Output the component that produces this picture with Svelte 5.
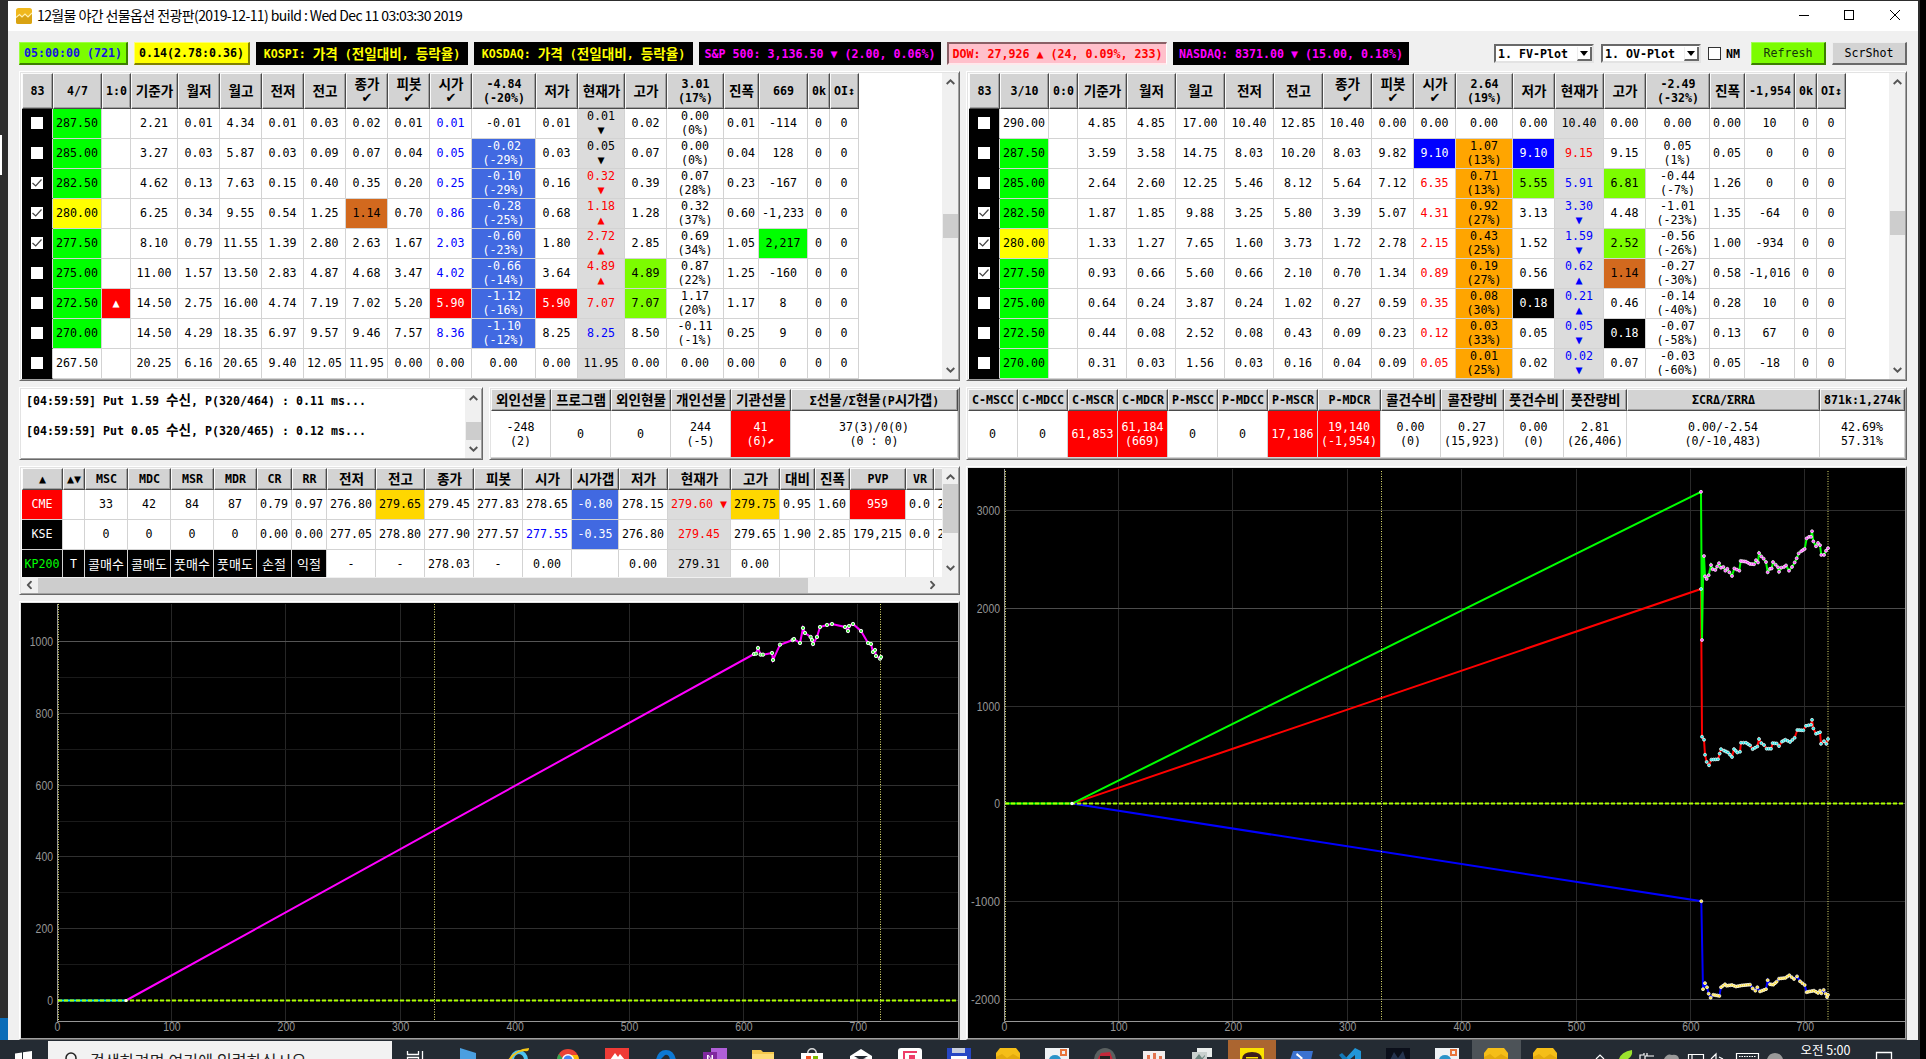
<script>
  // Cell notation: words split on spaces, "_" is empty or a blank inside text, "~" breaks the line, "@x" picks a style.
  const parse = (line) =>
    line.split(' ').map((word) => {
      const [text, cls = ''] = word.split('@');
      return { cls, lines: text === '_' ? [''] : text.split('~').map((t) => t.replaceAll('_', ' ')) };
    });
  const runs = (text) => text.split(/([가-힣]+)/).filter((s) => s !== '').map((s) => ({ s, ko: /[가-힣]/.test(s) }));
  const grid = (widths) => widths.map((w) => w + 'px').join(' ');

  const calls = {
    widths: [31, 49, 29, 47, 42, 42, 42, 42, 42, 42, 42, 64, 42, 47, 42, 57, 35, 49, 22, 29],
    head: parse('83 4/7 1:0 기준가 월저 월고 전저 전고 종가~✔ 피봇~✔ 시가~✔ -4.84~(-20%) 저가 현재가 고가 3.01~(17%) 진폭 669 0k OI↕'),
    thumb: 129,
    rows: [
      '0 287.50@lime _ 2.21 0.01 4.34 0.01 0.03 0.02 0.01 0.01@tb -0.01 0.01 0.01~▼@now 0.02 0.00~(0%) 0.01 -114 0 0',
      '0 285.00@lime _ 3.27 0.03 5.87 0.03 0.09 0.07 0.04 0.05@tb -0.02~(-29%)@royal 0.03 0.05~▼@now 0.07 0.00~(0%) 0.04 128 0 0',
      '1 282.50@lime _ 4.62 0.13 7.63 0.15 0.40 0.35 0.20 0.25@tb -0.10~(-29%)@royal 0.16 0.32~▼@nowr 0.39 0.07~(28%) 0.23 -167 0 0',
      '1 280.00@yel _ 6.25 0.34 9.55 0.54 1.25 1.14@choc 0.70 0.86@tb -0.28~(-25%)@royal 0.68 1.18~▲@nowr 1.28 0.32~(37%) 0.60 -1,233 0 0',
      '1 277.50@lime _ 8.10 0.79 11.55 1.39 2.80 2.63 1.67 2.03@tb -0.60~(-23%)@royal 1.80 2.72~▲@nowr 2.85 0.69~(34%) 1.05 2,217@lime 0 0',
      '0 275.00@lime _ 11.00 1.57 13.50 2.83 4.87 4.68 3.47 4.02@tb -0.66~(-14%)@royal 3.64 4.89~▲@nowr 4.89@lawn 0.87~(22%) 1.25 -160 0 0',
      '0 272.50@lime ▲@red 14.50 2.75 16.00 4.74 7.19 7.02 5.20 5.90@red -1.12~(-16%)@royal 5.90@red 7.07@nowr 7.07@lawn 1.17~(20%) 1.17 8 0 0',
      '0 270.00@lime _ 14.50 4.29 18.35 6.97 9.57 9.46 7.57 8.36@tb -1.10~(-12%)@royal 8.25 8.25@nowb 8.50 -0.11~(-1%) 0.25 9 0 0',
      '0 267.50 _ 20.25 6.16 20.65 9.40 12.05 11.95 0.00 0.00 0.00 0.00 11.95@now 0.00 0.00 0.00 0 0 0'
    ].map(parse)
  };
  const puts = {
    widths: [31, 49, 29, 49, 49, 49, 49, 49, 49, 42, 42, 57, 42, 49, 42, 64, 35, 50, 22, 29],
    head: parse('83 3/10 0:0 기준가 월저 월고 전저 전고 종가~✔ 피봇~✔ 시가~✔ 2.64~(19%) 저가 현재가 고가 -2.49~(-32%) 진폭 -1,954 0k OI↕'),
    thumb: 126,
    rows: [
      '0 290.00 _ 4.85 4.85 17.00 10.40 12.85 10.40 0.00 0.00 0.00 0.00 10.40@now 0.00 0.00 0.00 10 0 0',
      '0 287.50@lime _ 3.59 3.58 14.75 8.03 10.20 8.03 9.82 9.10@blue 1.07~(13%)@org 9.10@blue 9.15@nowr 9.15 0.05~(1%) 0.05 0 0 0',
      '0 285.00@lime _ 2.64 2.60 12.25 5.46 8.12 5.64 7.12 6.35@tr 0.71~(13%)@org 5.55@lawn 5.91@nowb 6.81@lawn -0.44~(-7%) 1.26 0 0 0',
      '1 282.50@lime _ 1.87 1.85 9.88 3.25 5.80 3.39 5.07 4.31@tr 0.92~(27%)@org 3.13 3.30~▼@nowb 4.48 -1.01~(-23%) 1.35 -64 0 0',
      '1 280.00@yel _ 1.33 1.27 7.65 1.60 3.73 1.72 2.78 2.15@tr 0.43~(25%)@org 1.52 1.59~▼@nowb 2.52@lawn -0.56~(-26%) 1.00 -934 0 0',
      '1 277.50@lime _ 0.93 0.66 5.60 0.66 2.10 0.70 1.34 0.89@tr 0.19~(27%)@org 0.56 0.62~▲@nowb 1.14@choc -0.27~(-30%) 0.58 -1,016 0 0',
      '0 275.00@lime _ 0.64 0.24 3.87 0.24 1.02 0.27 0.59 0.35@tr 0.08~(30%)@org 0.18@blk 0.21~▲@nowb 0.46 -0.14~(-40%) 0.28 10 0 0',
      '0 272.50@lime _ 0.44 0.08 2.52 0.08 0.43 0.09 0.23 0.12@tr 0.03~(33%)@org 0.05 0.05~▼@nowb 0.18@blk -0.07~(-58%) 0.13 67 0 0',
      '0 270.00@lime _ 0.31 0.03 1.56 0.03 0.16 0.04 0.09 0.05@tr 0.01~(25%)@org 0.02 0.02~▼@nowb 0.07 -0.03~(-60%) 0.05 -18 0 0'
    ].map(parse)
  };
  const investors = {
    widths: [60, 60, 60, 60, 60, 167],
    head: parse('외인선물 프로그램 외인현물 개인선물 기관선물 Σ선물/Σ현물(P시가갭)'),
    row: parse('-248~(2) 0 0 244~(-5) 41~(6)⬈@red 37(3)/0(0)~(0_:_0)')
  };
  const ratios = {
    widths: [50, 50, 50, 50, 50, 50, 50, 63, 60, 63, 60, 63, 193, 85],
    head: parse('C-MSCC C-MDCC C-MSCR C-MDCR P-MSCC P-MDCC P-MSCR P-MDCR 콜건수비 콜잔량비 풋건수비 풋잔량비 ΣCRΔ/ΣRRΔ 871k:1,274k'),
    row: parse('0 0 61,853@red 61,184~(669)@red 0 0 17,186@red 19,140~(-1,954)@red 0.00~(0) 0.27~(15,923) 0.00~(0) 2.81~(26,406) 0.00/-2.54~(0/-10,483) 42.69%~57.31%')
  };
  const futures = {
    widths: [41, 22, 43, 43, 43, 43, 35, 35, 49, 49, 49, 49, 49, 47, 49, 63, 49, 35, 35, 56, 28, 15],
    head: parse('▲ ▲▼ MSC MDC MSR MDR CR RR 전저 전고 종가 피봇 시가 시가갭 저가 현재가 고가 대비 진폭 PVP VR _'),
    rows: [
      'CME@red _ 33 42 84 87 0.79 0.97 276.80 279.65@gold 279.45 277.83 278.65 -0.80@royal 278.15 279.60_▼@nowr 279.75@gold 0.95 1.60 959@red 0.0 2',
      'KSE@blk _ 0 0 0 0 0.00 0.00 277.05 278.80 277.90 277.57 277.55@tb -0.35@royal 276.80 279.45@nowr 279.65 1.90 2.85 179,215 0.0 2',
      'KP200@kp T@blk 콜매수@blk 콜매도@blk 풋매수@blk 풋매도@blk 손절@blk 익절@blk - - 278.03 - 0.00 _ 0.00 279.31@now 0.00 _ _ _ _ _'
    ].map(parse)
  };

  // Chart series. Tail samples sit on a fine lattice whose origin and step belong to the plot.
  const onLattice = (flat, ox, oy, sx, sy) => {
    const pts = [];
    for (let i = 0; i < flat.length; i += 2) pts.push([ox + flat[i] / sx, oy + flat[i + 1] / sy]);
    return pts;
  };
  const path = (pts) => pts.map((p) => p[0].toFixed(1) + ',' + p[1].toFixed(1)).join(' ');
  const markers = (pts) => {
    const out = [];
    for (let i = 0; i < pts.length - 1; i++) {
      const [a, b] = [pts[i], pts[i + 1]];
      const n = Math.max(1, Math.round((b[0] - a[0]) / 2.1));
      for (let k = 0; k < n; k++) out.push([a[0] + ((b[0] - a[0]) * k) / n, a[1] + ((b[1] - a[1]) * k) / n]);
    }
    out.push(pts[pts.length - 1]);
    return out;
  };

  const fvTail = onLattice([42,132,48,131,54,114,62,134,69,134,96,129,99,150,120,104,158,90,162,87,180,99,189,54,195,69,212,81,216,90,219,102,231,81,240,51,261,45,276,42,315,51,324,63,327,48,339,42,363,63,384,99,393,102,399,126,405,120,408,138,420,146,423,141], 740, 610, 3, 3);
  const rx = 1660, ry = 470, sy = 2.662;
  const green = onLattice([132,229,135,283,140,290,146,280,153,253,158,264,166,266,177,248,183,260,190,258,196,268,202,263,208,272,216,282,223,262,238,268,242,242,258,244,270,250,282,251,288,240,294,246,297,221,304,230,311,236,318,245,323,272,330,263,335,262,339,245,347,252,354,259,357,271,364,260,372,258,378,254,387,268,396,258,404,246,410,235,416,222,424,216,434,210,440,182,447,178,453,178,456,163,460,190,468,203,474,194,480,200,484,226,492,226,498,215,504,208], rx, ry, 3, sy);
  const red = onLattice([126,710,132,718,135,758,140,777,147,786,154,771,174,770,179,755,183,743,192,747,204,752,216,764,222,743,232,752,240,750,243,726,258,726,270,733,278,743,292,736,297,716,304,727,312,732,320,742,333,742,338,727,350,728,357,735,366,723,376,718,390,724,404,713,412,692,430,693,438,681,453,678,456,665,460,688,468,702,480,698,483,729,492,722,499,729,504,716], rx, ry, 3, sy);
  const blue = onLattice([129,1382,135,1366,141,1377,146,1394,152,1405,160,1397,178,1400,183,1377,195,1369,200,1373,216,1371,228,1375,246,1372,270,1370,278,1380,286,1386,292,1377,300,1388,318,1382,323,1358,330,1369,340,1370,350,1362,357,1354,376,1352,388,1345,402,1355,411,1348,420,1361,434,1371,440,1390,450,1388,462,1386,474,1392,480,1386,484,1393,491,1384,497,1394,501,1403,504,1397], rx, ry, 3, sy);
  const ovLines = [
    { color: '#0000ff', pts: [[1072, 803.6], [1701.3, 901.2], [1703, 989], ...blue], dots: markers(blue), dot: '#ffe033', extra: [[1701.3, 901.2]] },
    { color: '#ff0000', pts: [[1072, 803.6], [1701, 589], [1702, 736.7], ...red], dots: markers(red), dot: '#22e6e6', extra: [[1701, 589]] },
    { color: '#00ff00', pts: [[1072, 803.6], [1701, 491.8], [1702, 640], [1703.4, 556], ...green], dots: markers(green), dot: '#ff44ff', extra: [[1701, 491.8], [1702, 640]] }
  ];

  const tickX = [0, 1, 2, 3, 4, 5, 6, 7];
  const fvY = [[1000, 641.5], [800, 713.5], [600, 785.5], [400, 856.5], [200, 928.5], [0, 1000.5]];
  const ovY = [[3000, 510.5], [2000, 608.5], [1000, 706.5], [0, 803.5], [-1000, 901.5], [-2000, 999.5]];

  const apps = [
    [['M2 0 18 5 18 12 2 12Z', '#4a9fe0']],
    [['M3 12a9 10 0 0 1 18 0h-4a5 6 0 0 0-10 0z', '#4cc3f1'], ['M1 12Q8 1 22 0 22 4 18 3 8 4 4 12z', '#f5c518']],
    [['M1 12a11 11 0 0 1 22 0z', '#ea4335'], ['M1 12Q1 8 3 6L8 12z', '#34a853'], ['M23 12Q23 9 21.500 7H14L17 12z', '#fbbc05'], ['M12 6a6 6 0 0 1 6 6H6a6 6 0 0 1 6-6z', '#fff'], ['M12 7.500a4.500 4.500 0 0 1 4.500 4.500H7.500A4.500 4.500 0 0 1 12 7.500z', '#4285f4']],
    [['M0 0h24v12H0z', '#ef3b36'], ['M5 12 10 5 13 9 15 6 20 12z', '#fff']],
    [['M2 12Q4 2 12 2T22 12H16Q15 6 11 7L6 12z', '#0d78d4']],
    [['M8 0h16v12H8z', '#b05fd8'], ['M0 4h14v8H0z', '#80289f'], ['M4 12V7h1.5l3 4V7H10v5H8.5L5.5 8v4z', '#fff']],
    [['M1 2h9l2 2h11v8H1z', '#f5c84c'], ['M1 6h22v6H1z', '#ffdc75']],
    [['M1 5h22v7H1z', '#fff'], ['M7 5a5 5 0 0 1 10 0h-1.5a3.500 3.500 0 0 0-7 0z', '#ddd'], ['M6 8h5v4H6z', '#f25022'], ['M13 8h5v4h-5z', '#7fba00']],
    [['M1 8 12 1 23 8V12L12 10 1 12z', '#fff'], ['M5 8H19L12 12z', '#242a33']],
    [['M3 0h18q3 0 3 3v9H0V3q0-3 3-3z', '#fff'], ['M5 3h14v2H7v7H5z', '#ee3d68'], ['M11 7h6v5h-6z', '#ee3d68']],
    [['M0 0h24v12H0z', '#2746c4'], ['M5 0h13v5H5z', '#c8cedc'], ['M4 8h16v4H4z', '#fff']],
    [['M4 0h16l4 5v7H0V5z', '#f5be18'], ['M0 9 6 6 11 10 17 6 24 10v2H0z', '#e3a90d']],
    [['M0 0h24v12H0z', '#eef2f5'], ['M15 1h7v7h-7z', '#e8743b'], ['M17 3h3v3h-3z', '#eef2f5'], ['M4 12a6 5 0 0 1 12 0z', '#2a93c9']],
    [['M1 12A11 12 0 0 1 23 12z', '#5a6060'], ['M4 12 8 5 17 4 20 12z', '#c2283a'], ['M7 8h10v4H7z', '#222']],
    [['M1 3h22v9H1z', '#f3eeee'], ['M5 7h3v5H5zM11 5h3v7h-3zM17 8h3v4h-3z', '#e3744f']],
    [['M6 0h15v9H6z', '#e9eceb'], ['M1 4h15v8H1z', '#c9d0ce'], ['M4 11 8 6 11 10 14 7v1l-3 4z', '#68827c']],
    [['M0 0h24v12H0z', '#fae100'], ['M2 12Q2 4 12 4T22 12z', '#3b1e1e'], ['M6 9h12v1.500H6z', '#fae100']],
    [['M4 3h20l-2 9H1z', '#3b72d0'], ['M8 5 14 10 12 12 11 10 7 7z', '#fff']],
    [['M17 0 23 3V12H17V7L11 12H6z', '#2196d8'], ['M1 7 4 5 10 11 8 12H5z', '#1479b8']],
    [['M0 0h24v12H0z', '#0b0f1a'], ['M4 12 8 4 12 10 17 3 20 12z', '#25344f']],
    [['M0 0h24v12H0z', '#eef2f5'], ['M15 1h7v7h-7z', '#e8743b'], ['M17 3h3v3h-3z', '#eef2f5'], ['M4 12a6 5 0 0 1 12 0z', '#2a93c9']],
    [['M4 0h16l4 5v7H0V5z', '#f5be18'], ['M0 9 6 6 11 10 17 6 24 10v2H0z', '#e3a90d']],
    [['M4 0h16l4 5v7H0V5z', '#f5be18'], ['M0 9 6 6 11 10 17 6 24 10v2H0z', '#e3a90d']]
  ];
</script>

{#snippet rich(lines)}
  {#each lines as line}
    <span class="line" class:mark={line === '✔'}>{#each runs(line) as run}{#if run.ko}<span class="ko">{run.s}</span>{:else}{run.s}{/if}{/each}</span>
  {/each}
{/snippet}

{#snippet chevron(dir)}
  <svg class="chev {dir}" viewBox="0 0 9 6" width="9" height="6"><path d="M0.700 5 4.500 1.300 8.300 5" fill="none" stroke="#555" stroke-width="1.900" /></svg>
{/snippet}

{#snippet options(t)}
  <section class="frame split">
    <div class="sheet">
      <div class="row head tall" style="grid-template-columns: {grid(t.widths)}">
        {#each t.head as c}<div class="th">{@render rich(c.lines)}</div>{/each}
      </div>
      {#each t.rows as row}
        <div class="row" style="grid-template-columns: {grid(t.widths)}">
          {#each row as c, i}
            {#if i === 0}
              <div class="td check">
                <svg viewBox="0 0 12 12" width="12" height="12"><rect width="12" height="12" fill="#fff" />{#if c.lines[0] === '1'}<path d="M1.500 6 4.700 9 10.500 2.500" fill="none" stroke="#444" stroke-width="1.200" />{/if}</svg>
              </div>
            {:else}
              <div class="td {c.cls}">{@render rich(c.lines)}</div>
            {/if}
          {/each}
        </div>
      {/each}
    </div>
    <div class="vbar">{@render chevron('up')}<i class="thumb" style="height: 24px; margin-top: {t.thumb}px"></i>{@render chevron('down')}</div>
  </section>
{/snippet}

{#snippet summary(t)}
  <section class="frame">
    <div class="row head" style="grid-template-columns: {grid(t.widths)}">
      {#each t.head as c}<div class="th">{@render rich(c.lines)}</div>{/each}
    </div>
    <div class="row single" style="grid-template-columns: {grid(t.widths)}">
      {#each t.row as c}<div class="td {c.cls}">{@render rich(c.lines)}</div>{/each}
    </div>
  </section>
{/snippet}

{#snippet tick(x, y, label, anchor)}
  <text {x} {y} text-anchor={anchor} textLength={String(label).length * 5.8} lengthAdjust="spacingAndGlyphs">{label}</text>
{/snippet}

<div class="screen">
  <div class="window">
    <header class="title">
      <svg class="logo" viewBox="0 0 16 16" width="16" height="16"><rect width="16" height="16" rx="2.500" fill="#f0b81c" /><path d="M0 9.500 3.500 6.500 6 9 9 6 12 9 16 5V14q0 2-2 2H2q-2 0-2-2z" fill="#d9a312" /><path d="M0 9.500 3.500 6.500 6 9 9 6 12 9 16 5" fill="none" stroke="#fff0b0" stroke-width="1.200" /></svg>
      <span class="caption">12월물 야간 선물옵션 전광판(2019-12-11) build : Wed Dec 11 03:03:30 2019</span>
      <svg class="winbtns" viewBox="0 0 110 16" width="110" height="16" fill="none" stroke="#000"><path d="M4 7.500h10" /><rect x="49.500" y="2.500" width="9" height="9" /><path d="M95 2 105 12M105 2 95 12" /></svg>
    </header>

    <div class="bar">
      <div class="tag clock">05:00:00 (721)</div>
      <div class="tag gap">0.14(2.78:0.36)</div>
      <div class="tag kospi">KOSPI: <span class="ko">가격</span> (<span class="ko">전일대비</span>, <span class="ko">등락율</span>)</div>
      <div class="tag kosdaq">KOSDAQ: <span class="ko">가격</span> (<span class="ko">전일대비</span>, <span class="ko">등락율</span>)</div>
      <div class="tag sp">S&amp;P 500: 3,136.50 ▼ (2.00, 0.06%)</div>
      <div class="tag dow">DOW: 27,926 ▲ (24, 0.09%, 233)</div>
      <div class="tag nasdaq">NASDAQ: 8371.00 ▼ (15.00, 0.18%)</div>
      <div class="controls">
        <div class="combo">1. FV-Plot<span class="drop"></span></div>
        <div class="combo">1. OV-Plot<span class="drop"></span></div>
        <span class="box"></span><span class="nm">NM</span>
        <button class="btn refresh">Refresh</button>
        <button class="btn">ScrShot</button>
      </div>
    </div>

    <div class="columns">
      <div class="col left">
        {@render options(calls)}
        <div class="pair">
          <section class="frame split">
            <div class="log">
              <p>[04:59:59] Put 1.59 <span class="ko">수신</span>, P(320/464) : 0.11 ms...</p>
              <p>[04:59:59] Put 0.05 <span class="ko">수신</span>, P(320/465) : 0.12 ms...</p>
            </div>
            <div class="vbar">{@render chevron('up')}<i class="thumb" style="height: 18px; margin-top: 21px"></i>{@render chevron('down')}</div>
          </section>
          {@render summary(investors)}
        </div>
        <section class="frame futures">
          <div class="split grow">
            <div class="sheet">
              <div class="row head" style="grid-template-columns: {grid(futures.widths)}">
                {#each futures.head as c}<div class="th">{@render rich(c.lines)}</div>{/each}
              </div>
              {#each futures.rows as row}
                <div class="row" style="grid-template-columns: {grid(futures.widths)}">
                  {#each row as c}<div class="td {c.cls}">{@render rich(c.lines)}</div>{/each}
                </div>
              {/each}
            </div>
            <div class="vbar">{@render chevron('up')}<i class="thumb" style="height: 49px; margin-top: 4px"></i>{@render chevron('down')}</div>
          </div>
          <div class="hbar"><span class="turn l">{@render chevron('up')}</span><i class="hthumb"></i><span class="turn r">{@render chevron('up')}</span></div>
        </section>
        <section class="frame plot">
          <svg viewBox="21 603 937 435" width="937" height="435">
            <rect x="21" y="603" width="937" height="435" fill="#000" />
            {#each tickX as k}<path d="M{Math.round(57.5 + k * 114.4) - 0.5} 604V1021" stroke="#262626" />{/each}
            {#each fvY as [label, y]}<path d="M58 {y}H958" stroke={label === 1000 ? '#555' : '#303030'} />{#if y < 1000}<path d="M58 {y + 36}H958" stroke="#1a1a1a" />{/if}{/each}
            <path d="M57.500 604V1021.500H958" fill="none" stroke="#969696" />
            <path d="M58 1000.500H126" stroke="#00e5ff" stroke-width="2" />
            <polyline points="126,1000.5 {path(fvTail)}" fill="none" stroke="#ff00ff" stroke-width="2" />
            <path d="M58 1000.500H958" stroke="#adff00" stroke-width="2" stroke-dasharray="4 2" />
            {#each [58.5, 434.5, 880.5] as x}<path d="M{x} 604V1021" stroke="#e0e070" stroke-dasharray="1 1.500" />{/each}
            {#each fvTail as [x, y]}<circle cx={x} cy={y} r="1.700" fill="#4df04d" stroke="#fff" stroke-width="0.900" />{/each}
            <circle cx="126" cy="1000.500" r="1.500" fill="#fff" />
            <g class="ticks">
              {#each fvY as [label, y]}{@render tick(53, y + 4.5, label, 'end')}{/each}
              {#each tickX as k}{@render tick(57.5 + k * 114.4, 1031, k * 100, 'middle')}{/each}
            </g>
          </svg>
        </section>
      </div>

      <div class="col right">
        {@render options(puts)}
        {@render summary(ratios)}
        <section class="frame plot">
          <svg viewBox="968 468 937 570" width="937" height="570">
            <rect x="968" y="468" width="937" height="570" fill="#000" />
            {#each tickX as k}<path d="M{Math.round(1004.5 + k * 114.4) - 0.5} 469V1021" stroke="#292929" />{/each}
            {#each ovY as [label, y]}<path d="M1005 {y}H1905" stroke={label % 2000 ? '#2e2e2e' : '#4c4c4c'} />{/each}
            <path d="M1004.500 469V1021.500H1905" fill="none" stroke="#969696" />
            <path d="M1005 803.500H1072" stroke="#00ff00" stroke-width="2" />
            {#each ovLines as s}
              <polyline points={path(s.pts)} fill="none" stroke={s.color} stroke-width="2" />
            {/each}
            <path d="M1005 803.500H1905" stroke="#adff00" stroke-width="2" stroke-dasharray="4 2" />
            {#each [1005.5, 1381.5, 1828] as x}<path d="M{x} 471V1021" stroke="#e0e070" stroke-dasharray="1 1.500" />{/each}
            {#each ovLines as s}
              {#each [...s.dots, ...s.extra] as [x, y]}<circle cx={x} cy={y} r="1.500" fill={s.dot} stroke="#fff" stroke-width="0.700" />{/each}
            {/each}
            <circle cx="1072" cy="803.500" r="1.700" fill="#fff" />
            <g class="ticks">
              {#each ovY as [label, y]}{@render tick(1000, y + 4.5, label, 'end')}{/each}
              {#each tickX as k}{@render tick(1004.5 + k * 114.4, 1031, k * 100, 'middle')}{/each}
            </g>
          </svg>
        </section>
      </div>
    </div>
  </div>

  <footer class="taskbar">
    <svg class="start" viewBox="0 0 48 19" width="48" height="19"><path d="M15 13.500 22 12.500V19H15zM23 12.300 32 11V19H23z" fill="#fff" /></svg>
    <div class="search">
      <svg viewBox="0 0 14 16" width="14" height="16"><circle cx="7" cy="7" r="5" fill="none" stroke="#222" stroke-width="1.500" /></svg>
      <span>검색하려면 여기에 입력하십시오</span>
    </div>
    <svg class="taskview" viewBox="0 0 54 19" width="54" height="19"><path d="M15.500 11V14.500H26.500V11M15.500 19V17.500H26.500V19M30.500 11V19" fill="none" stroke="#fff" stroke-width="1.300" /></svg>
    {#each apps as shapes, i}
      <div class="app" class:talk={i === 16} class:active={i === 21}>
        <svg viewBox="0 0 24 12" width="24" height="12">{#each shapes as [d, fill]}<path {d} {fill} />{/each}</svg>
      </div>
    {/each}
    <svg class="tray" viewBox="1590 1040 200 19" width="200" height="19" fill="none" stroke="#fff" stroke-width="1.200">
      <path d="M1597 1059 1601 1055 1605 1059" />
      <path d="M1620 1059Q1622 1052 1633 1050 1634 1056 1629 1059z" fill="#9be22d" stroke="none" />
      <path d="M1641 1059V1055H1645V1053M1646 1059V1056H1655M1648 1053V1056" />
      <path d="M1665 1059Q1668 1053 1673 1055 1679 1054 1680 1059z" fill="#999" stroke="none" />
      <path d="M1689.500 1059V1054.500H1704.500V1059M1693 1055V1059" />
      <path d="M1712 1059 1717 1054V1059M1720 1057 1724 1059" />
      <path d="M1737.500 1059V1053.500H1759.500V1059" /><path d="M1740 1056.500H1757" stroke-dasharray="1.500 1" />
      <path d="M1768 1059Q1770 1053 1776 1053T1784 1059z" fill="#999" stroke="none" />
    </svg>
    <span class="time">오전 5:00</span>
    <svg class="notice" viewBox="0 0 30 19" width="30" height="19"><path d="M5.500 19V12.500H20.500V19" fill="none" stroke="#fff" stroke-width="1.300" /></svg>
  </footer>
</div>

<style>
  :global(body) { background: #000; overflow: hidden; }
  .screen {
    width: 1926px; height: 1059px; box-sizing: border-box; overflow: hidden;
    display: flex; flex-direction: column;
    background: linear-gradient(#fff, #fff) 0 135px / 2px 40px no-repeat,
      linear-gradient(#0a6cb8, #0a6cb8) 0 1018px / 8px 22px no-repeat,
      linear-gradient(90deg, #2d2d2d 1920px, #000 1920px);
    font-family: 'DejaVu Sans Mono', 'DejaVu Sans', 'Noto Sans CJK KR', monospace;
    font-size: 11.63px; color: #000;
  }
  .ko { font-family: 'Noto Sans CJK KR', sans-serif; font-size: 13.6px; line-height: 1; }
  .window { margin: 1px 0 0 8px; width: 1910px; height: 1039px; background: #f0f0f0; display: flex; flex-direction: column; flex: none; }
  .title { height: 30px; background: #fff; display: flex; align-items: center; flex: none; }
  .logo { margin: 0 5px 1px 8px; }
  .caption { font: 14px 'Noto Sans CJK KR', sans-serif; letter-spacing: -0.6px; white-space: nowrap; line-height: 20px; margin-top: -2px; }
  .winbtns { margin-left: auto; margin-right: 13px; }
  .bar { display: flex; gap: 6px; padding: 11px 11px 0; height: 23px; margin-bottom: 6px; flex: none; }
  .tag { height: 23px; box-sizing: border-box; display: flex; align-items: center; justify-content: center; font-weight: bold; white-space: pre; background: #000; flex: none; }
  .clock { width: 109px; background: #7cfc00; color: #1414e0; border: 1px solid #9cff40; border-right: 2px solid #3c7e00; border-bottom: 2px solid #3c7e00; }
  .gap { width: 116px; background: #ff0; border: 1px solid #ffff70; border-right: 2px solid #808000; border-bottom: 2px solid #808000; }
  .kospi { width: 212px; color: #ff0; }
  .kosdaq { width: 219px; color: #ff0; }
  .sp { width: 242px; color: #f0f; }
  .dow { width: 220px; color: #f00; background: #ffc0cb; border: 2px solid #8a6066; border-right: 1px solid #fff; border-bottom: 2px solid #ffe8ec; }
  .nasdaq { width: 236px; color: #f0f; }
  .controls { margin-left: auto; display: flex; align-items: center; height: 23px; font-weight: bold; }
  .combo { width: 100px; height: 19px; margin-right: 7px; box-sizing: border-box; background: #fff; border: 2px solid; border-color: #696969 #e3e3e3 #e3e3e3 #696969; display: flex; align-items: center; justify-content: space-between; padding-left: 2px; white-space: pre; }
  .drop { width: 15px; height: 14px; box-sizing: border-box; border-right: 2px solid #696969; border-bottom: 2px solid #696969; border-left: 1px solid #eee; position: relative; }
  .drop::after { content: ''; position: absolute; left: 2px; top: 4px; border: 4px solid transparent; border-top: 5px solid #000; border-bottom: 0; }
  .box { width: 11px; height: 11px; border: 1px solid #333; background: #fff; margin-right: 5px; }
  .nm { width: 14px; margin-right: 11px; }
  .btn { width: 75px; height: 23px; padding: 0; margin-left: 6px; font: inherit; font-weight: normal; color: #000; background: #d3d3d3; border: 1px solid #eee; border-right: 2px solid #696969; border-bottom: 2px solid #696969; }
  .refresh { background: #7cfc00; color: #14380c; margin-left: 0; border-color: #a0ff50 #3c7e00 #3c7e00 #a0ff50; }
  .columns { display: flex; gap: 6px; padding-left: 11px; }
  .col { width: 941px; display: grid; gap: 6px; }
  .left { grid-template-rows: 310px 73px 129px 439px; }
  .right { grid-template-rows: 310px 73px 574px; }
  .pair { display: grid; grid-template-columns: 464px 471px; gap: 6px; }
  .frame { box-sizing: border-box; border: 1px solid; border-color: #fff #696969 #696969 #fff; box-shadow: inset 1px 1px #e3e3e3, inset -1px -1px #a0a0a0; padding: 1px; background: #fff; overflow: hidden; min-width: 0; min-height: 0; }
  .split { display: flex; min-height: 0; }
  .sheet { flex: 1; overflow: hidden; padding-left: 1px; min-width: 0; }
  .row { display: grid; height: 30px; }
  .head { height: 22px; font-weight: bold; }
  .tall { height: 36px; }
  .single { height: 47px; }
  .th, .td { box-sizing: border-box; display: flex; flex-direction: column; align-items: center; justify-content: center; white-space: pre; overflow: hidden; line-height: 14px; }
  .th { background: #d3d3d3; border: 1px solid #fafafa; border-right: 1px solid #4a4a4a; border-bottom: 1px solid #4a4a4a; box-shadow: inset -1px -1px #a0a0a0; }
  .td { border-right: 1px solid #d3d3d3; border-bottom: 1px solid #d3d3d3; }
  .sheet .td { padding-bottom: 1px; }
  .line { line-height: 14px; height: 14px; display: block; }
  .td .ko { font-size: 13px; }
  .mark { font-size: 13px; font-style: italic; }
  .check { background: #000; border-bottom-color: #000; }
  .lime { background: #0f0; } .yel { background: #ff0; } .lawn { background: #7cfc00; } .choc { background: #d2691e; }
  .org { background: #ffa500; } .gold { background: #ffd700; }
  .royal { background: #4169e1; color: #fff; } .red { background: #f00; color: #fff; } .blue { background: #00f; color: #fff; }
  .blk { background: #000; color: #fff; } .kp { background: #000; color: #0f0; }
  .now, .nowr, .nowb { background: #dcdcdc; } .nowr, .tr { color: #f00; } .nowb, .tb { color: #00f; }
  .vbar { width: 16px; flex: none; background: #f0f0f0; display: flex; flex-direction: column; align-items: center; padding: 6px 0 6px; box-sizing: border-box; }
  .chev { display: block; flex: none; }
  .down { transform: rotate(180deg); margin-top: auto; }
  .thumb { width: 15px; background: #cdcdcd; flex: none; }
  .log { flex: 1; padding: 2px 5px; font-weight: bold; }
  .log p { margin: 0; height: 30px; line-height: 20px; white-space: pre; }
  .futures { display: flex; flex-direction: column; }
  .grow { flex: 1; }
  .hbar { height: 16px; flex: none; background: #f0f0f0; display: flex; align-items: center; }
  .turn { width: 17px; display: flex; justify-content: center; flex: none; }
  .l { transform: rotate(-90deg); } .r { transform: rotate(90deg); margin-left: 116px; }
  .hthumb { width: 770px; height: 15px; background: #cdcdcd; flex: none; }
  .plot svg { display: block; }
  .ticks { font: 12.5px 'Liberation Sans', sans-serif; fill: #969696; }
  .taskbar { height: 19px; width: 1920px; flex: none; display: flex; background: #242b33; overflow: hidden; color: #fff; }
  .taskbar > svg { flex: none; }
  .search { width: 344px; height: 18px; margin-top: 1px; background: #f2f2f2; color: #222; display: flex; align-items: flex-start; flex: none; overflow: hidden; }
  .search svg { margin: 10px 12px 0 16px; flex: none; }
  .search span { font: 16px/22px 'Noto Sans CJK KR', sans-serif; padding-top: 8px; white-space: nowrap; letter-spacing: 0.2px; }
  .app { width: 48.85px; flex: none; display: flex; justify-content: center; padding-top: 8px; height: 19px; box-sizing: border-box; }
  .talk { background: #ab6530; } .active { background: #4d5358; }
  .tray { margin-left: 20px; }
  .time { font: 12.5px/20px 'Noto Sans CJK KR', sans-serif; margin-left: 11px; width: 71px; white-space: nowrap; flex: none; }
</style>
